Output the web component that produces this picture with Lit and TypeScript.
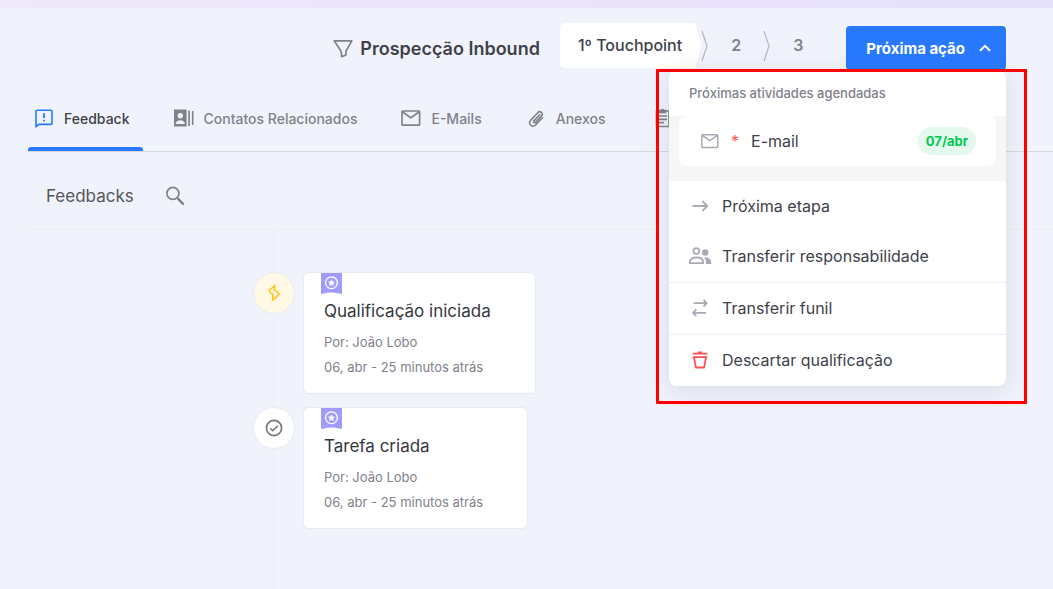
import { LitElement, html, css, svg, nothing } from "lit";
import { customElement, property, state } from "lit/decorators.js";
import { classMap } from "lit/directives/class-map.js";

const icons: Record<string, unknown> = {
  funnel: svg`<svg width="20" height="20" viewBox="0 0 20 20" fill="none" stroke="currentColor" stroke-width="1.7" stroke-linejoin="round"><path d="M1.2 2.8h17.6l-5.600 9.900-.500 4.600-4 1.300-.600-5.400z"/></svg>`,
  feedback: svg`<svg width="20" height="20" viewBox="0 0 20 20" fill="none" stroke="currentColor" stroke-width="1.6" stroke-linejoin="round"><path d="M2 19V3.200c0-.6.4-1 1-1h14c.6 0 1 .4 1 1v12.200c0 .6-.4 1-1 1H4.600z"/><path d="M10 5.200V10M10 11.800v1.800" stroke-width="1.8"/></svg>`,
  contacts: svg`<svg width="20" height="20" viewBox="0 0 20 20" fill="currentColor"><path fill-rule="evenodd" d="M0 1.500h12.600v17H0zM6.300 5.100a2.700 2.700 0 0 0 0 5.400 2.700 2.700 0 0 0 0-5.400zM1.700 16.100h9.200c0-2.500-2.200-3.900-4.600-3.900s-4.600 1.400-4.600 3.900z"/><path d="M14.200 2.500h1.700v15.400h-1.700zM17.900 3.100h1.600v14h-1.600z"/></svg>`,
  mail: svg`<svg width="20" height="20" viewBox="0 0 20 20" fill="none" stroke="currentColor" stroke-width="1.700" stroke-linejoin="round"><rect x="1" y="3" width="17.600" height="14.200" rx=".8"/><path d="M1.600 4 9.800 9.700 18 4"/></svg>`,
  clip: svg`<svg width="20" height="20" viewBox="0 0 20 20" fill="none" stroke="currentColor" stroke-width="1.600" stroke-linecap="round"><path d="M13.800 6.500 7.900 12.900c-1 1.100.6 2.600 1.600 1.500l5.900-6.300c2.400-2.700-1.200-6-3.700-3.400l-6.900 7.400c-3.300 3.800 1.500 8.300 5 4.700l6.600-7"/></svg>`,
  clipboard: svg`<svg width="20" height="20" viewBox="0 0 20 20" fill="none" stroke="currentColor" stroke-width="1.700"><path d="M7.500 3H20v15.500H7.500z"/><path d="M10.500 4.500V2.500h1.600a1.500 1.500 0 0 1 2.800 0h1.600v2z" fill="currentColor"/><path d="M9.500 8H18M9.500 11.300H18M9.500 14.600h5.500"/></svg>`,
  search: svg`<svg width="20" height="20" viewBox="0 0 20 20" fill="none" stroke="currentColor"><circle cx="7.900" cy="7.400" r="6" stroke-width="1.700"/><path d="m12.200 11.800 1.500 1.500" stroke-width="1.700"/><path d="m13.600 13.300 4.400 4.600" stroke-width="2.400" stroke-linecap="round"/></svg>`,
  caret: svg`<svg width="12" height="12" viewBox="0 0 12 12" fill="none" stroke="currentColor" stroke-width="2"><path d="M1 8.800 6 3.800l5 5"/></svg>`,
  arrow: svg`<svg width="24" height="20" viewBox="0 0 24 20" fill="none" stroke="currentColor" stroke-width="1.800" stroke-linejoin="round"><path d="M4.500 10h14.700M14.400 5.200 19.200 10l-4.800 4.800"/></svg>`,
  people: svg`<svg width="24" height="20" viewBox="0 0 24 20" fill="none" stroke="currentColor" stroke-width="1.800"><circle cx="8.300" cy="5" r="2.900"/><path d="M1.900 17.200v-1.400c0-2.700 3-4.300 6.600-4.300s6.600 1.600 6.600 4.300v1.400z" stroke-linejoin="round"/><circle cx="17.200" cy="6.500" r="3.200" fill="currentColor" stroke="none"/><path d="M15.800 11.500c4.600-.3 7.400 1.500 7.400 4.300V18h-5.300v-2.200c0-1.700-.7-3.200-2.100-4.300z" fill="currentColor" stroke="none"/></svg>`,
  swap: svg`<svg width="24" height="20" viewBox="0 0 24 20" fill="none" stroke="currentColor" stroke-width="1.800" stroke-linejoin="round"><path d="M5.500 5.200h13.300M15.500 1.900l3.300 3.300-3.300 3.300M18 14.800H5M8.300 11.500 5 14.800l3.300 3.300"/></svg>`,
  trash: svg`<svg width="24" height="20" viewBox="0 0 24 20" fill="none" stroke="currentColor" stroke-width="1.800"><path d="M4.600 3.600h14.800M9.800 2.500h4.400"/><path d="M4.600 7.200h14.800M6 7.200l1.900 10.300h8.200L18 7.200" stroke-linejoin="round"/></svg>`,
  bolt: svg`<svg width="20" height="20" viewBox="0 0 20 20" fill="none" stroke="currentColor" stroke-width="1.700" stroke-linejoin="round"><path d="M10.900 2.600 5 7.300l2.100 3.300 1.800.4-.3 6.400 6.600-6.200-3.100-3.400-1.700-.5z"/></svg>`,
  check: svg`<svg width="20" height="20" viewBox="0 0 20 20" fill="none" stroke="currentColor" stroke-width="1.600"><circle cx="10" cy="10" r="7.600"/><path d="m6.300 10.200 2.500 2.500 5-5"/></svg>`,
  ribbon: svg`<svg width="21" height="21" viewBox="0 0 21 21"><path d="M0 0h21v19.400c0 1.300-.8 1.800-2 1.400-5.400-1.900-11.600-1.900-17 0-1.200.4-2-.1-2-1.400z" fill="#a29bfe"/><circle cx="10.500" cy="9.700" r="5.900" fill="none" stroke="#fff" stroke-width="1.300"/><path d="m10.500 6.200 1.100 2.300 2.500.3-1.900 1.700.5 2.500-2.200-1.200L8.300 13l.5-2.500-1.900-1.700 2.500-.3z" fill="#fff"/></svg>`,
};

@customElement("step-track")
class StepTrack extends LitElement {
  @state() private current = 0;
  private steps = ["1º Touchpoint", "2", "3"];

  static styles = css`
    ol { display: flex; align-items: center; margin: 0; padding: 0; list-style: none; }
    li { display: flex; align-items: center; }
    button { font: 600 16px/45px Inter, sans-serif; color: #81818b; background: none; border: 0; padding: 0 22px; cursor: pointer; }
    .first { font-weight: 500; padding: 0 18px; }
    .current { color: #40414a; background: #fff; border-radius: 5px 0 0 5px; padding-right: 11px; }
    svg { display: block; }
  `;

  render() {
    return html`<ol>
      ${this.steps.map((s, i) => html`<li>
        ${i > 0 ? svg`<svg width="8" height="32" viewBox="0 0 8 32" fill="none" stroke="#b4b5be" stroke-width="1.200"><path d="M1 1 6 16l-5 15"/></svg>` : nothing}
        <button class=${classMap({ first: i === 0, current: i === this.current })} @click=${() => (this.current = i)}>${s}</button>
        ${i === this.current ? svg`<svg width="8" height="45" viewBox="0 0 8 45"><path d="M0 0c2 0 2.500 1 3 2.500L8 20q.5 2.500 0 5L3 42.500C2.500 44 2 45 0 45z" fill="#fff"/></svg>` : nothing}
      </li>`)}
    </ol>`;
  }
}

@customElement("action-menu")
class ActionMenu extends LitElement {
  @state() private open = true;

  static styles = css`
    :host { display: block; position: relative; z-index: 2; }
    button { font-family: Inter, sans-serif; border: 0; background: none; cursor: pointer; text-align: left; }
    .trigger { display: flex; align-items: center; gap: 14px; height: 44px; padding: 0 15px 0 20px; border-radius: 4px; background: #2979ff; color: #fff; font-size: 15px; font-weight: 700; white-space: nowrap; }
    .panel { position: absolute; top: 100%; right: 0; width: 337px; border-radius: 8px; background: #fff; box-shadow: 0 4px 24px rgba(60, 65, 85, 0.13); color: #40414a; }
    h2 { margin: 0; padding: 0 20px; font-size: 13px; line-height: 46px; font-weight: 500; color: #81818b; }
    .band { background: #f6f6f6; padding: 0 10px 15px; }
    .scheduled { display: flex; align-items: center; width: 100%; height: 50px; padding: 0 20px 0 22px; border-radius: 8px; background: #fff; color: #40414a; font-size: 16px; }
    .scheduled svg { width: 18px; height: 18px; color: #aaaab5; }
    .star { color: #ff5252; padding: 0 12px; }
    .date { margin-left: auto; padding: 0 8px; border-radius: 14px; line-height: 28px; background: #e5f8ed; color: #00c853; font-size: 13px; font-weight: 700; }
    .item { display: flex; align-items: center; gap: 10px; width: 100%; height: 50px; padding: 0 19px; color: #40414a; font-size: 16px; }
    .item svg { color: #aaaab5; flex: none; }
    .item.danger svg { color: #ff5252; }
    .group { padding-bottom: 1px; }
    .group + .group { border-top: 1px solid #eceef6; }
    .marker { position: absolute; inset: -1px -21px -18px -13px; border: 3px solid #fe0000; border-radius: 1px; pointer-events: none; }
  `;

  private item(icon: string, label: string, danger = false) {
    return html`<button role="menuitem" class=${classMap({ item: true, danger })}>${icons[icon]}<span>${label}</span></button>`;
  }

  render() {
    return html`
      <button class="trigger" aria-expanded=${this.open} @click=${() => (this.open = !this.open)}>Próxima ação ${icons.caret}</button>
      ${this.open ? html`<div class="panel" role="menu">
        <h2>Próximas atividades agendadas</h2>
        <div class="band"><button class="scheduled" role="menuitem">${icons.mail}<span class="star">*</span><span>E-mail</span><span class="date">07/abr</span></button></div>
        <div class="group">${this.item("arrow", "Próxima etapa")}${this.item("people", "Transferir responsabilidade")}</div>
        <div class="group">${this.item("swap", "Transferir funil")}</div>
        <div class="group">${this.item("trash", "Descartar qualificação", true)}</div>
        <div class="marker"></div>
      </div>` : nothing}`;
  }
}

@customElement("timeline-entry")
class TimelineEntry extends LitElement {
  @property() icon = "check";
  @property() heading = "";
  @property() author = "";
  @property() when = "";

  static styles = css`
    :host { display: flex; align-items: flex-start; gap: 8px; position: relative; }
    .node { display: grid; place-items: center; width: 40px; height: 40px; border: 1px solid #e9ebf2; border-radius: 50%; background: #fff; color: #74747e; }
    .node.bolt { background: #fff8e5; color: #ffca28; }
    article { display: flex; flex-direction: column; padding: 0 44px 13px 20px; border: 1px solid #e7e9f0; border-radius: 6px; background: #fff; }
    article > svg { display: block; margin-left: -3px; }
    h3 { margin: 5px 0 6px; font-size: 17px; line-height: 25px; font-weight: 400; color: #36373f; }
    p { margin: 0; font-size: 13px; line-height: 25px; color: #81818b; }
  `;

  render() {
    return html`
      <div class=${classMap({ node: true, bolt: this.icon === "bolt" })}>${icons[this.icon]}</div>
      <article>${icons.ribbon}<h3>${this.heading}</h3><p>Por: ${this.author}</p><p>${this.when}</p></article>`;
  }
}

@customElement("app-root")
class AppRoot extends LitElement {
  @state() private tab = 0;
  private tabs = [
    ["feedback", "Feedback"],
    ["contacts", "Contatos Relacionados"],
    ["mail", "E-Mails"],
    ["clip", "Anexos"],
    ["clipboard", "Atividades"],
  ];
  private entries = [
    { icon: "bolt", heading: "Qualificação iniciada" },
    { icon: "check", heading: "Tarefa criada" },
  ];

  static styles = css`
    :host { display: flex; flex-direction: column; min-height: 100vh; box-sizing: border-box; background: #f0f3fb; font-family: Inter, sans-serif; color: #40414a; }
    .strip { height: 8px; background: linear-gradient(90deg, #eee8fa, #e6e1fb); }
    header { display: flex; align-items: center; justify-content: flex-end; min-height: 50px; padding: 15px 47px 0 28px; }
    h1 { display: flex; align-items: center; gap: 7px; margin: 0 20px 0 0; font-size: 18px; font-weight: 600; white-space: nowrap; }
    h1 svg { color: #81818b; }
    step-track { align-self: flex-start; margin-right: 21px; }
    nav { display: flex; gap: 25px; margin-left: 28px; padding-top: 14px; border-bottom: 1px solid #d5d8df; }
    .tab { display: flex; align-items: center; gap: 10px; height: 64px; padding: 0 13px 2px 6px; box-sizing: border-box; text-decoration: none; color: #81818b; font-size: 14px; font-weight: 500; white-space: nowrap; position: relative; }
    .tab.active { color: #40414a; }
    .tab.active svg { color: #2979ff; }
    .tab.active::after { content: ""; position: absolute; left: 0; right: 0; bottom: 0; height: 4px; border-radius: 3px 3px 0 0; background: #2979ff; }
    .bar { display: flex; align-items: center; gap: 31px; height: 78px; padding: 10px 0 0 18px; box-sizing: border-box; margin-left: 28px; border-bottom: 1px solid #ebeef4; }
    h2 { margin: 0; font-size: 17px; font-weight: 400; color: #54555f; }
    .search { display: flex; padding: 0; border: 0; background: none; color: #81818b; }
    .timeline { flex: 1; display: flex; flex-direction: column; align-items: flex-start; gap: 13px; padding: 42px 28px 0 253px; background: linear-gradient(#ebeef6, #ebeef6) 273px 0 / 1px 100% no-repeat; }
  `;

  render() {
    return html`
      <div class="strip"></div>
      <header>
        <h1>${icons.funnel}<span>Prospecção Inbound</span></h1>
        <step-track></step-track>
        <action-menu></action-menu>
      </header>
      <nav>
        ${this.tabs.map(([icon, label], i) => html`<a href="#" class=${classMap({ tab: true, active: i === this.tab })}
          @click=${(e: Event) => { e.preventDefault(); this.tab = i; }}>${icons[icon]}<span>${label}</span></a>`)}
      </nav>
      <div class="bar"><h2>Feedbacks</h2><button class="search" aria-label="Buscar">${icons.search}</button></div>
      <main class="timeline">
        ${this.entries.map((e) => html`<timeline-entry icon=${e.icon} heading=${e.heading} author="João Lobo" when="06, abr - 25 minutos atrás"></timeline-entry>`)}
      </main>`;
  }
}
